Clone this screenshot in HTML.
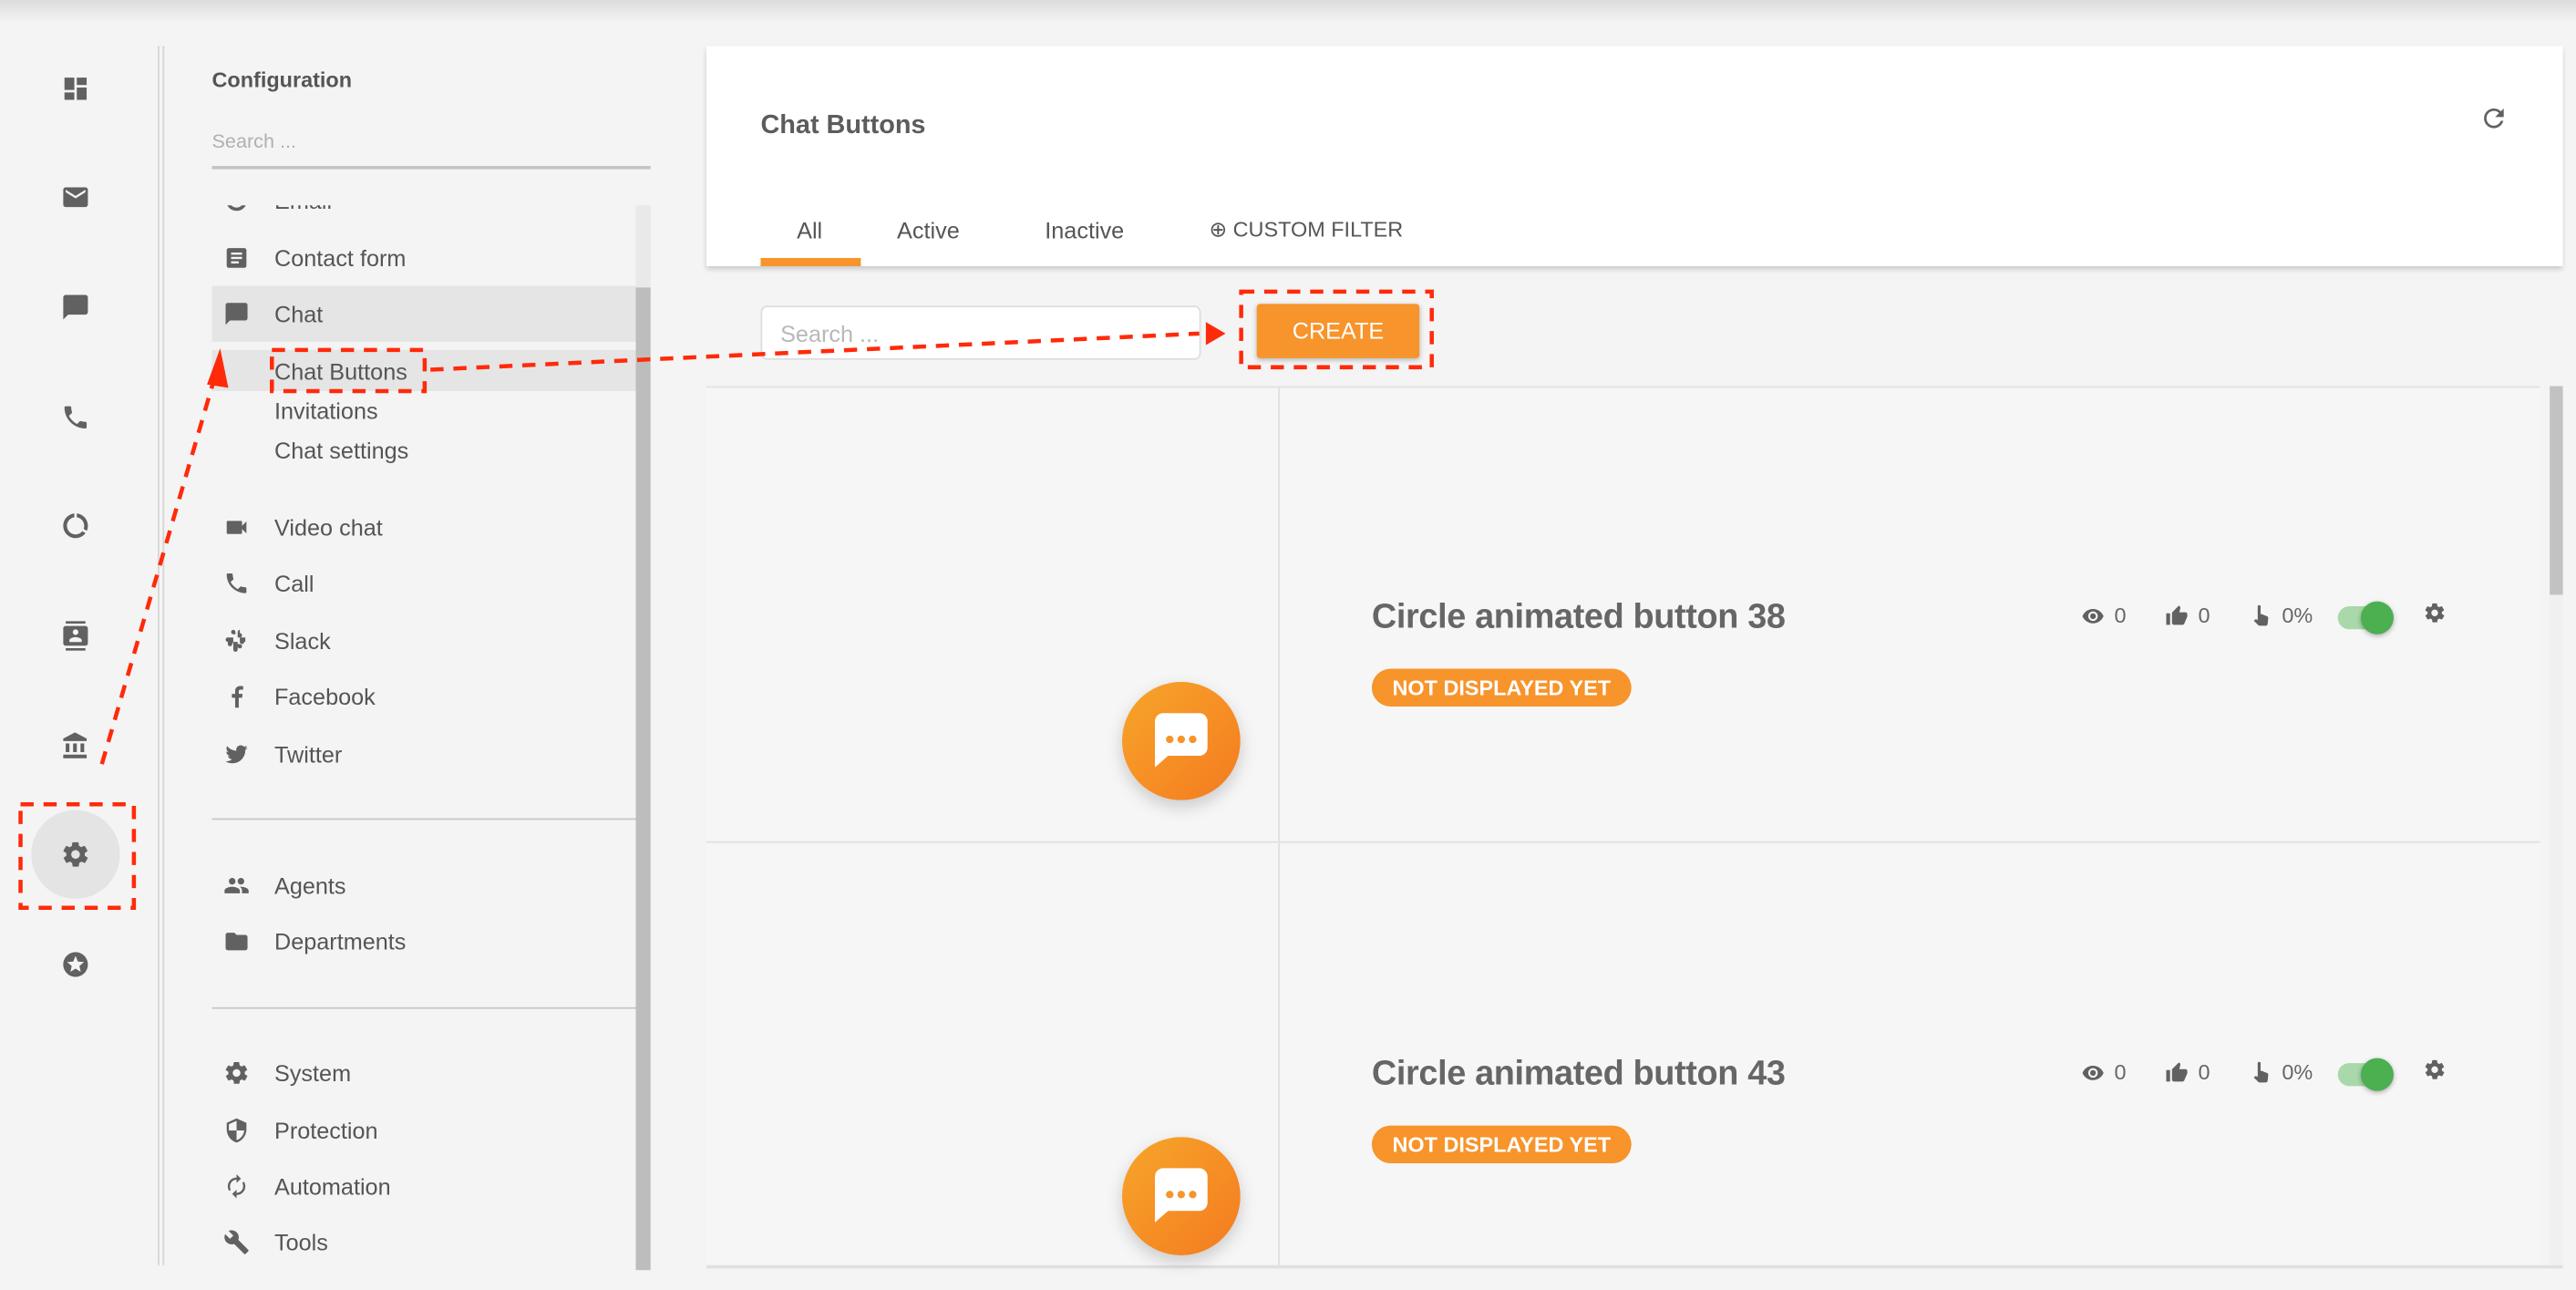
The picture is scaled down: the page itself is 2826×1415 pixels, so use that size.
<!DOCTYPE html>
<html><head><meta charset="utf-8"><style>
*{margin:0;padding:0;box-sizing:border-box}
html,body{width:2826px;height:1414px;overflow:hidden;background:#f4f4f4}
#s{position:absolute;left:0;top:0;width:1568px;height:785px;transform:scale(1.8023);transform-origin:0 0;font-family:"Liberation Sans",sans-serif;color:#5f5f5f;background:#f4f4f4}
.a{position:absolute}
.ic{position:absolute;width:18px;height:18px;fill:#616161}
.it{position:absolute;left:167px;font-size:14px;color:#555;line-height:16px}
.sub{position:absolute;left:167px;font-size:14px;color:#555;line-height:16px}
.ttl{position:absolute;left:835px;font-size:20px;font-weight:bold;color:#666;letter-spacing:-0.2px}
.badge{position:absolute;left:835px;width:158px;height:23px;border-radius:12px;background:#f7942b;color:#fff;font-size:13px;font-weight:bold;text-align:center;line-height:23px}
.st{position:absolute;font-size:13px;color:#666}
.bub{position:absolute;width:72px;height:72px;border-radius:50%;background:linear-gradient(135deg,#f7a52a,#f47b20);box-shadow:0 4px 10px rgba(0,0,0,.18)}
.tg{position:absolute;width:32px;height:14px;border-radius:7px;background:#a9d9ab}
.tg i{position:absolute;right:-2px;top:-3px;width:20px;height:20px;border-radius:50%;background:#4caf50;box-shadow:0 1px 3px rgba(0,0,0,.3)}
</style></head><body><div id="s">
<div class="a" style="left:0;top:0;width:1568px;height:14px;background:linear-gradient(#dcdcdc,#f4f4f4)"></div>
<svg class="ic" style="left:37px;top:45px" viewBox="0 0 24 24"><path d="M3 13h8V3H3zm0 8h8v-6H3zm10 0h8V11h-8zm0-18v6h8V3z"/></svg>
<svg class="ic" style="left:37px;top:111px" viewBox="0 0 24 24"><path d="M20 4H4c-1.1 0-2 .9-2 2v12c0 1.1.9 2 2 2h16c1.1 0 2-.9 2-2V6c0-1.1-.9-2-2-2zm0 4l-8 5-8-5V6l8 5 8-5z"/></svg>
<svg class="ic" style="left:37px;top:178px" viewBox="0 0 24 24"><path d="M20 2H4c-1.1 0-2 .9-2 2v18l4-4h14c1.1 0 2-.9 2-2V4c0-1.1-.9-2-2-2z"/></svg>
<svg class="ic" style="left:37px;top:245px" viewBox="0 0 24 24"><path d="M6.6 10.8c1.4 2.8 3.8 5.1 6.6 6.6l2.2-2.2c.3-.3.7-.4 1-.2 1.1.4 2.3.6 3.6.6.6 0 1 .4 1 1V20c0 .6-.4 1-1 1C10.6 21 3 13.4 3 4c0-.6.4-1 1-1h3.5c.6 0 1 .4 1 1 0 1.3.2 2.5.6 3.6.1.3 0 .7-.2 1z"/></svg>
<svg class="ic" style="left:37px;top:311px" viewBox="0 0 24 24"><path d="M13 2.05v3.03c3.39.49 6 3.39 6 6.92 0 .9-.18 1.75-.48 2.540l2.6 1.53c.56-1.24.88-2.62.88-4.07 0-5.18-3.950-9.450-9-9.95zM12 19c-3.87 0-7-3.13-7-7 0-3.53 2.61-6.43 6-6.92V2.05c-5.06.5-9 4.76-9 9.95 0 5.52 4.47 10 9.99 10 3.31 0 6.24-1.61 8.06-4.09l-2.6-1.53C16.17 17.98 14.21 19 12 19z"/></svg>
<svg class="ic" style="left:37px;top:378px" viewBox="0 0 24 24"><path d="M20 0H4v2h16zM4 24h16v-2H4zM20 4H4c-1.1 0-2 .9-2 2v12c0 1.1.9 2 2 2h16c1.1 0 2-.9 2-2V6c0-1.1-.9-2-2-2zm-8 2.75c1.24 0 2.25 1.01 2.25 2.25s-1.01 2.25-2.25 2.25S9.75 10.24 9.75 9 10.76 6.75 12 6.75zM17 17H7v-1.5c0-1.67 3.33-2.5 5-2.5s5 .83 5 2.5z"/></svg>
<svg class="ic" style="left:37px;top:445px" viewBox="0 0 24 24"><path d="M4 10v7h3v-7zm6 0v7h3v-7zM2 22h19v-3H2zm14-12v7h3v-7zM11.5 1L2 6v2h19V6z"/></svg>
<div class="a" style="left:19px;top:493px;width:54px;height:54px;border-radius:50%;background:#e4e4e4"></div>
<svg class="ic" style="left:37px;top:511px" viewBox="0 0 24 24"><path d="M19.4 13c0-.3.1-.6.1-1s0-.7-.1-1l2.1-1.6c.2-.2.2-.4.1-.6l-2-3.5c-.1-.2-.4-.3-.6-.2l-2.5 1c-.5-.4-1.1-.7-1.7-1l-.4-2.6c0-.2-.2-.4-.5-.4h-4c-.2 0-.4.2-.5.4l-.4 2.7c-.6.2-1.1.6-1.7 1l-2.5-1c-.2-.1-.5 0-.6.2l-2 3.5c-.1.2-.1.5.1.6L4.6 11c0 .3-.1.6-.1 1s0 .7.1 1l-2.1 1.6c-.2.2-.2.4-.1.6l2 3.5c.1.2.4.3.6.2l2.5-1c.5.4 1.1.7 1.7 1l.4 2.6c0 .2.2.4.5.4h4c.2 0 .5-.2.5-.4l.4-2.6c.6-.3 1.2-.6 1.7-1l2.5 1c.2.1.5 0 .6-.2l2-3.5c.1-.2.1-.5-.1-.6zM12 15.5c-1.9 0-3.5-1.6-3.5-3.5s1.6-3.5 3.5-3.5 3.5 1.6 3.5 3.5-1.6 3.5-3.5 3.5z"/></svg>
<svg class="ic" style="left:37px;top:578px" viewBox="0 0 24 24"><path d="M12 2C6.5 2 2 6.5 2 12s4.5 10 10 10 10-4.5 10-10S17.5 2 12 2zm4.2 16L12 15.4 7.8 18l1.1-4.8-3.7-3.2 4.9-.4L12 5l1.9 4.6 4.9.4-3.7 3.2z"/></svg>
<div class="a" style="left:96px;top:28px;width:1px;height:742px;background:#d6d6d6"></div>
<div class="a" style="left:99px;top:28px;width:1px;height:742px;background:#d6d6d6"></div>
<div class="a" style="left:129px;top:41px;font-size:13px;font-weight:bold;color:#555">Configuration</div>
<div class="a" style="left:129px;top:79px;font-size:12px;color:#b0b0b0">Search ...</div>
<div class="a" style="left:129px;top:101px;width:267px;height:2px;background:#c4c4c4"></div>
<div class="a" style="left:129px;top:125px;width:258px;height:648px;overflow:hidden">
 <div class="a" style="left:0;top:-11px;width:258px;height:16px"><span class="a" style="left:38px;top:0;font-size:14px;color:#555">Email</span><svg class="a" style="left:7px;top:0;width:16px;height:16px;fill:#616161" viewBox="0 0 24 24"><circle cx="12" cy="12" r="8" fill="none" stroke="#616161" stroke-width="3"/></svg></div>
</div>
<div class="a" style="left:129px;top:174px;width:258px;height:34px;background:#e5e5e5"></div>
<div class="a" style="left:129px;top:213px;width:258px;height:25px;background:#e5e5e5"></div>
<svg class="ic" style="left:136px;top:149px;width:16px;height:16px" viewBox="0 0 24 24"><path d="M19 3H5c-1.1 0-2 .9-2 2v14c0 1.1.9 2 2 2h14c1.1 0 2-.9 2-2V5c0-1.1-.9-2-2-2zm-5 14H7v-2h7zm3-4H7v-2h10zm0-4H7V7h10z"/></svg>
<div class="it" style="top:149px">Contact form</div>
<svg class="ic" style="left:136px;top:183px;width:16px;height:16px" viewBox="0 0 24 24"><path d="M20 2H4c-1.1 0-2 .9-2 2v18l4-4h14c1.1 0 2-.9 2-2V4c0-1.1-.9-2-2-2z"/></svg>
<div class="it" style="top:183px">Chat</div>
<div class="sub" style="top:218px">Chat Buttons</div>
<div class="sub" style="top:242px">Invitations</div>
<div class="sub" style="top:266px">Chat settings</div>
<svg class="ic" style="left:136px;top:313px;width:16px;height:16px" viewBox="0 0 24 24"><path d="M17 10.5V7c0-.55-.45-1-1-1H4c-.55 0-1 .45-1 1v10c0 .55.45 1 1 1h12c.55 0 1-.45 1-1v-3.5l4 4v-11z"/></svg>
<div class="it" style="top:313px">Video chat</div>
<svg class="ic" style="left:136px;top:347px;width:16px;height:16px" viewBox="0 0 24 24"><path d="M6.6 10.8c1.4 2.8 3.8 5.1 6.6 6.6l2.2-2.2c.3-.3.7-.4 1-.2 1.1.4 2.3.6 3.6.6.6 0 1 .4 1 1V20c0 .6-.4 1-1 1C10.6 21 3 13.4 3 4c0-.6.4-1 1-1h3.5c.6 0 1 .4 1 1 0 1.3.2 2.5.6 3.6.1.3 0 .7-.2 1z"/></svg>
<div class="it" style="top:347px">Call</div>
<svg class="ic" style="left:136px;top:382px;width:16px;height:16px" viewBox="0 0 24 24"><path d="M9 2a2 2 0 000 4h2V4a2 2 0 00-2-2zm-5 7a2 2 0 000 4h5V9zm11-7a2 2 0 00-2 2v5h2a2 2 0 000-4zm5 7h-5v4a2 2 0 104 0zM15 15h-2v2a2 2 0 102-2zm-6-2H4v2a2 2 0 104 0zM9 13v7a2 2 0 104 0v-7zM20 9a2 2 0 100 4z"/></svg>
<div class="it" style="top:382px">Slack</div>
<svg class="ic" style="left:136px;top:416px;width:16px;height:16px" viewBox="0 0 24 24"><path d="M14 22v-9h3l.5-3.5H14V7.3c0-1 .3-1.7 1.8-1.7H18V2.4c-.4 0-1.5-.1-2.7-.1-2.7 0-4.6 1.7-4.6 4.7v2.5H7.7V13h3v9z"/></svg>
<div class="it" style="top:416px">Facebook</div>
<svg class="ic" style="left:136px;top:451px;width:16px;height:16px" viewBox="0 0 24 24"><path d="M22 5.9c-.7.3-1.5.5-2.4.6.9-.5 1.5-1.3 1.8-2.3-.8.5-1.7.8-2.6 1-.8-.8-1.9-1.3-3-1.3-2.3 0-4.1 1.8-4.1 4.1 0 .3 0 .6.1.9C8.4 8.7 5.4 7.1 3.4 4.6c-.4.6-.6 1.3-.6 2.1 0 1.4.7 2.7 1.8 3.4-.7 0-1.3-.2-1.9-.5 0 2 1.4 3.7 3.3 4.1-.6.2-1.2.2-1.9.1.5 1.6 2 2.8 3.8 2.9-1.4 1.1-3.2 1.8-5.1 1.8H2c1.8 1.2 4 1.8 6.3 1.8 7.5 0 11.7-6.3 11.7-11.7v-.5c.8-.6 1.5-1.3 2-2.2z"/></svg>
<div class="it" style="top:451px">Twitter</div>
<div class="a" style="left:129px;top:498px;width:258px;height:1px;background:#c8c8c8"></div>
<svg class="ic" style="left:136px;top:531px;width:16px;height:16px" viewBox="0 0 24 24"><path d="M16 11c1.7 0 3-1.3 3-3s-1.3-3-3-3-3 1.3-3 3 1.3 3 3 3zm-8 0c1.7 0 3-1.3 3-3S9.7 5 8 5 5 6.3 5 8s1.3 3 3 3zm0 2c-2.3 0-7 1.2-7 3.5V19h14v-2.5C15 14.2 10.3 13 8 13zm8 0c-.3 0-.6 0-1 .1 1.2.8 2 2 2 3.4V19h6v-2.5c0-2.3-4.7-3.5-7-3.5z"/></svg>
<div class="it" style="top:531px">Agents</div>
<svg class="ic" style="left:136px;top:565px;width:16px;height:16px" viewBox="0 0 24 24"><path d="M10 4H4c-1.1 0-2 .9-2 2v12c0 1.1.9 2 2 2h16c1.1 0 2-.9 2-2V8c0-1.1-.9-2-2-2h-8z"/></svg>
<div class="it" style="top:565px">Departments</div>
<div class="a" style="left:129px;top:613px;width:258px;height:1px;background:#c8c8c8"></div>
<svg class="ic" style="left:136px;top:645px;width:16px;height:16px" viewBox="0 0 24 24"><path d="M19.4 13c0-.3.1-.6.1-1s0-.7-.1-1l2.1-1.6c.2-.2.2-.4.1-.6l-2-3.5c-.1-.2-.4-.3-.6-.2l-2.5 1c-.5-.4-1.1-.7-1.7-1l-.4-2.6c0-.2-.2-.4-.5-.4h-4c-.2 0-.4.2-.5.4l-.4 2.7c-.6.2-1.1.6-1.7 1l-2.5-1c-.2-.1-.5 0-.6.2l-2 3.5c-.1.2-.1.5.1.6L4.6 11c0 .3-.1.6-.1 1s0 .7.1 1l-2.1 1.6c-.2.2-.2.4-.1.6l2 3.5c.1.2.4.3.6.2l2.5-1c.5.4 1.1.7 1.7 1l.4 2.6c0 .2.2.4.5.4h4c.2 0 .5-.2.5-.4l.4-2.6c.6-.3 1.2-.6 1.7-1l2.5 1c.2.1.5 0 .6-.2l2-3.5c.1-.2.1-.5-.1-.6zM12 15.5c-1.9 0-3.5-1.6-3.5-3.5s1.6-3.5 3.5-3.5 3.5 1.6 3.5 3.5-1.6 3.5-3.5 3.5z"/></svg>
<div class="it" style="top:645px">System</div>
<svg class="ic" style="left:136px;top:680px;width:16px;height:16px" viewBox="0 0 24 24"><path d="M12 1L3 5v6c0 5.5 3.8 10.7 9 12 5.2-1.3 9-6.5 9-12V5zm0 11h7c-.5 4.1-3.3 7.8-7 8.9V12H5V6.3l7-3.1z"/></svg>
<div class="it" style="top:680px">Protection</div>
<svg class="ic" style="left:136px;top:714px;width:16px;height:16px" viewBox="0 0 24 24"><path d="M12 6v3l4-4-4-4v3c-4.4 0-8 3.6-8 8 0 1.6.5 3 1.2 4.3L6.7 15c-.5-.8-.7-1.8-.7-3 0-3.3 2.7-6 6-6zm6.8 1.7L17.3 9c.4.9.7 1.9.7 3 0 3.3-2.7 6-6 6v-3l-4 4 4 4v-3c4.4 0 8-3.6 8-8 0-1.6-.5-3-1.2-4.3z"/></svg>
<div class="it" style="top:714px">Automation</div>
<svg class="ic" style="left:136px;top:748px;width:16px;height:16px" viewBox="0 0 24 24"><path d="M22.7 19l-9.1-9.1c.9-2.3.4-5-1.5-6.9-2-2-5-2.4-7.4-1.3L9 6 6 9 1.6 4.7C.4 7.1.9 10.1 2.9 12.1c1.9 1.9 4.6 2.4 6.9 1.5l9.1 9.1c.4.4 1 .4 1.4 0l2.3-2.3c.5-.4.5-1.1.1-1.4z"/></svg>
<div class="it" style="top:748px">Tools</div>
<div class="a" style="left:387px;top:125px;width:9px;height:648px;background:#e9e9e9"></div>
<div class="a" style="left:387px;top:175px;width:9px;height:598px;background:#bdbdbd"></div>
<div class="a" style="left:430px;top:28px;width:1130px;height:134px;background:#fff;box-shadow:0 2px 3px rgba(0,0,0,.18)"></div>
<div class="a" style="left:463px;top:68px;font-size:16px;font-weight:bold;color:#5c5c5c">Chat Buttons</div>
<svg class="ic" style="left:1509px;top:63px;width:18px;height:18px" viewBox="0 0 24 24"><path d="M17.65 6.35A7.958 7.958 0 0012 4c-4.42 0-7.99 3.58-7.990 8s3.57 8 7.99 8c3.73 0 6.84-2.55 7.73-6h-2.08A5.99 5.99 0 0112 18c-3.31 0-6-2.69-6-6s2.69-6 6-6c1.66 0 3.14.69 4.22 1.78L13 11h7V4z"/></svg>
<div class="a" style="left:485px;top:132px;font-size:14px;color:#555">All</div>
<div class="a" style="left:463px;top:157px;width:61px;height:5px;background:#f7942b"></div>
<div class="a" style="left:546px;top:132px;font-size:14px;color:#555">Active</div>
<div class="a" style="left:636px;top:132px;font-size:14px;color:#555">Inactive</div>
<div class="a" style="left:736px;top:132px;font-size:13px;color:#555">&#8853; CUSTOM FILTER</div>
<div class="a" style="left:463px;top:186px;width:268px;height:33px;background:#fff;border:1px solid #ddd;border-radius:4px"></div>
<div class="a" style="left:475px;top:195px;font-size:14px;color:#b8b8b8">Search ...</div>
<div class="a" style="left:765px;top:185px;width:99px;height:33px;background:#f7942b;border-radius:2px;box-shadow:0 1px 3px rgba(0,0,0,.25);color:#fff;font-size:14px;text-align:center;line-height:33px">CREATE</div>
<div class="a" style="left:430px;top:235px;width:1116px;height:535px;background:#f6f6f6;border-top:1px solid #e2e2e2"></div>
<div class="a" style="left:778px;top:235px;width:1px;height:535px;background:#e0e0e0"></div>
<div class="a" style="left:430px;top:512px;width:1116px;height:1px;background:#e0e0e0"></div>
<div class="a" style="left:1552px;top:235px;width:8px;height:535px;background:#f0f0f0"></div>
<div class="a" style="left:1552px;top:235px;width:8px;height:127px;background:#c2c2c2"></div>
<div class="a" style="left:430px;top:770px;width:1130px;height:2px;background:#e0e0e0"></div>
<div class="bub" style="left:683px;top:415px"></div>
<div class="bub" style="left:683px;top:692px"></div>
<svg class="a" style="left:701px;top:432px;width:36px;height:38px" viewBox="0 0 36 38"><path d="M7 2h22a5 5 0 015 5v16a5 5 0 01-5 5H10L2 35V7a5 5 0 015-5z" fill="#fff"/><circle cx="11" cy="18" r="2.3" fill="#f7942b"/><circle cx="18" cy="18" r="2.3" fill="#f7942b"/><circle cx="25" cy="18" r="2.3" fill="#f7942b"/></svg>
<svg class="a" style="left:701px;top:709px;width:36px;height:38px" viewBox="0 0 36 38"><path d="M7 2h22a5 5 0 015 5v16a5 5 0 01-5 5H10L2 35V7a5 5 0 015-5z" fill="#fff"/><circle cx="11" cy="18" r="2.3" fill="#f7942b"/><circle cx="18" cy="18" r="2.3" fill="#f7942b"/><circle cx="25" cy="18" r="2.3" fill="#f7942b"/></svg>
<div class="ttl" style="top:364px;font-size:21px">Circle animated button 38</div>
<div class="badge" style="top:407px">NOT DISPLAYED YET</div>
<div class="ttl" style="top:642px;font-size:21px">Circle animated button 43</div>
<div class="badge" style="top:685px">NOT DISPLAYED YET</div>
<div class="a" style="left:1266px;top:366px;width:240px;height:20px">
 <svg class="ic" style="left:1px;top:2px;width:14px;height:14px" viewBox="0 0 24 24"><path d="M12 4.5C7 4.5 2.7 7.6 1 12c1.7 4.4 6 7.5 11 7.5s9.3-3.1 11-7.5c-1.7-4.4-6-7.5-11-7.5zM12 17a5 5 0 110-10 5 5 0 010 10zm0-8a3 3 0 100 6 3 3 0 000-6z"/></svg>
 <span class="st" style="left:21px;top:1px">0</span>
 <svg class="ic" style="left:52px;top:2px;width:14px;height:14px" viewBox="0 0 24 24"><path d="M1 21h4V9H1zm22-11c0-1.1-.9-2-2-2h-6.3l1-4.6v-.3c0-.4-.2-.8-.4-1.1L14.2 1 7.6 7.6C7.2 7.9 7 8.4 7 9v10c0 1.1.9 2 2 2h9c.8 0 1.5-.5 1.8-1.2l3-7.1c.1-.2.2-.5.2-.7z"/></svg>
 <span class="st" style="left:72px;top:1px">0</span>
 <svg class="ic" style="left:103px;top:2px;width:14px;height:14px" viewBox="0 0 24 24"><path d="M9 2a1.5 1.5 0 013 0v8l1-.3 6 2.5c.6.3 1 .9 1 1.6l-.6 6.2c-.1 1.1-1 2-2.1 2H11c-.5 0-1-.2-1.4-.6L5 16.8l1-1.1c.4-.4 1-.5 1.5-.3L9 16z"/></svg>
 <span class="st" style="left:123px;top:1px">0%</span>
 <div class="tg" style="left:157px;top:3px"><i></i></div>
 <svg class="ic" style="left:209px;top:0px;width:14px;height:14px" viewBox="0 0 24 24"><path d="M19.4 13c0-.3.1-.6.1-1s0-.7-.1-1l2.1-1.6c.2-.2.2-.4.1-.6l-2-3.5c-.1-.2-.4-.3-.6-.2l-2.5 1c-.5-.4-1.1-.7-1.7-1l-.4-2.6c0-.2-.2-.4-.5-.4h-4c-.2 0-.4.2-.5.4l-.4 2.7c-.6.2-1.1.6-1.7 1l-2.5-1c-.2-.1-.5 0-.6.2l-2 3.5c-.1.2-.1.5.1.6L4.6 11c0 .3-.1.6-.1 1s0 .7.1 1l-2.1 1.6c-.2.2-.2.4-.1.6l2 3.5c.1.2.4.3.6.2l2.5-1c.5.4 1.1.7 1.7 1l.4 2.6c0 .2.2.4.5.4h4c.2 0 .5-.2.5-.4l.4-2.6c.6-.3 1.2-.6 1.7-1l2.5 1c.2.1.5 0 .6-.2l2-3.5c.1-.2.1-.5-.1-.6zM12 15.5c-1.9 0-3.5-1.6-3.5-3.5s1.6-3.5 3.5-3.5 3.5 1.6 3.5 3.5-1.6 3.5-3.5 3.5z"/></svg>
</div>
<div class="a" style="left:1266px;top:644px;width:240px;height:20px">
 <svg class="ic" style="left:1px;top:2px;width:14px;height:14px" viewBox="0 0 24 24"><path d="M12 4.5C7 4.5 2.7 7.6 1 12c1.7 4.4 6 7.5 11 7.5s9.3-3.1 11-7.5c-1.7-4.4-6-7.5-11-7.5zM12 17a5 5 0 110-10 5 5 0 010 10zm0-8a3 3 0 100 6 3 3 0 000-6z"/></svg>
 <span class="st" style="left:21px;top:1px">0</span>
 <svg class="ic" style="left:52px;top:2px;width:14px;height:14px" viewBox="0 0 24 24"><path d="M1 21h4V9H1zm22-11c0-1.1-.9-2-2-2h-6.3l1-4.6v-.3c0-.4-.2-.8-.4-1.1L14.2 1 7.6 7.6C7.2 7.9 7 8.4 7 9v10c0 1.1.9 2 2 2h9c.8 0 1.5-.5 1.8-1.2l3-7.1c.1-.2.2-.5.2-.7z"/></svg>
 <span class="st" style="left:72px;top:1px">0</span>
 <svg class="ic" style="left:103px;top:2px;width:14px;height:14px" viewBox="0 0 24 24"><path d="M9 2a1.5 1.5 0 013 0v8l1-.3 6 2.5c.6.3 1 .9 1 1.6l-.6 6.2c-.1 1.1-1 2-2.1 2H11c-.5 0-1-.2-1.4-.6L5 16.8l1-1.1c.4-.4 1-.5 1.5-.3L9 16z"/></svg>
 <span class="st" style="left:123px;top:1px">0%</span>
 <div class="tg" style="left:157px;top:3px"><i></i></div>
 <svg class="ic" style="left:209px;top:0px;width:14px;height:14px" viewBox="0 0 24 24"><path d="M19.4 13c0-.3.1-.6.1-1s0-.7-.1-1l2.1-1.6c.2-.2.2-.4.1-.6l-2-3.5c-.1-.2-.4-.3-.6-.2l-2.5 1c-.5-.4-1.1-.7-1.7-1l-.4-2.6c0-.2-.2-.4-.5-.4h-4c-.2 0-.4.2-.5.4l-.4 2.7c-.6.2-1.1.6-1.7 1l-2.5-1c-.2-.1-.5 0-.6.2l-2 3.5c-.1.2-.1.5.1.6L4.6 11c0 .3-.1.6-.1 1s0 .7.1 1l-2.1 1.6c-.2.2-.2.4-.1.6l2 3.5c.1.2.4.3.6.2l2.5-1c.5.4 1.1.7 1.7 1l.4 2.6c0 .2.2.4.5.4h4c.2 0 .5-.2.5-.4l.4-2.6c.6-.3 1.2-.6 1.7-1l2.5 1c.2.1.5 0 .6-.2l2-3.5c.1-.2.1-.5-.1-.6zM12 15.5c-1.9 0-3.5-1.6-3.5-3.5s1.6-3.5 3.5-3.5 3.5 1.6 3.5 3.5-1.6 3.5-3.5 3.5z"/></svg>
</div>
<svg class="a" style="left:0;top:0;width:1568px;height:785px" viewBox="0 0 1568 785">
 <g fill="none" stroke="#ff2a0a" stroke-width="2.5" stroke-dasharray="8 6">
  <rect x="12.5" y="489.5" width="69" height="63"/>
  <rect x="165.5" y="213" width="93" height="25"/>
  <rect x="755.5" y="177.5" width="116" height="46"/>
  <line x1="62" y1="465" x2="130" y2="232"/>
  <line x1="262" y1="225" x2="730" y2="203"/>
 </g>
 <polygon points="134,212 126,234 139,236" fill="#ff2a0a"/>
 <polygon points="746,203 734,196 734,210" fill="#ff2a0a"/>
</svg>
</div></body></html>
